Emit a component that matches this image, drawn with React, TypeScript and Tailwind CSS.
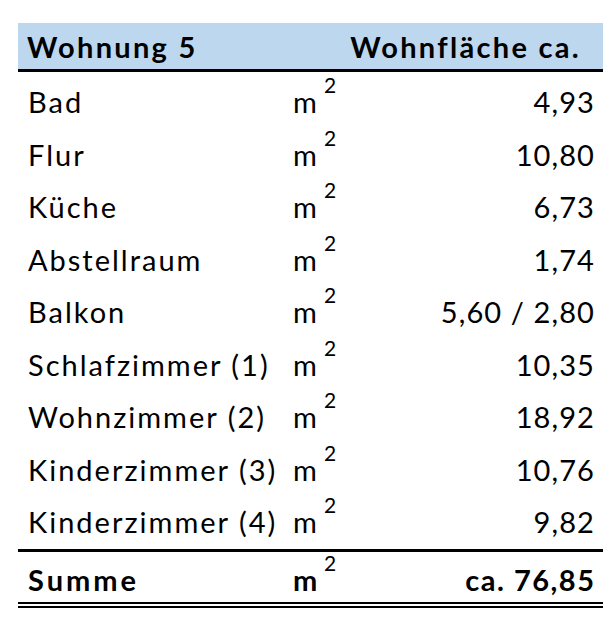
import React from "react";

const rows: [string, string][] = [
  ["Bad", "4,93"],
  ["Flur", "10,80"],
  ["Küche", "6,73"],
  ["Abstellraum", "1,74"],
  ["Balkon", "5,60 / 2,80"],
  ["Schlafzimmer (1)", "10,35"],
  ["Wohnzimmer (2)", "18,92"],
  ["Kinderzimmer (3)", "10,76"],
  ["Kinderzimmer (4)", "9,82"],
];

function Unit({ bold }: { bold?: boolean }) {
  return (
    <span className={`relative w-[60px] ${bold ? "font-bold" : ""}`}>
      m
      <span className="absolute left-[31px] top-[-13px] text-[21px] leading-none font-normal">2</span>
    </span>
  );
}

export default function App() {
  return (
    <div
      className="w-[616px] h-[618px] bg-white pt-[23px] pl-[18px] text-black"
      style={{ fontFamily: "Lato, 'Open Sans', sans-serif" }}
    >
      <div className="w-[585px]">
        <div className="h-[49px] bg-[#bdd7ee] border-b-[3px] border-black flex items-end justify-between pb-[8px] pl-[9px] pr-[22px] text-[29px] font-bold leading-none tracking-[2.3px]">
          <span>Wohnung 5</span>
          <span>Wohnfläche ca.</span>
        </div>
        <div className="pb-[4px]">
          {rows.map(([name, val]) => (
            <div
              key={name}
              className="h-[52.5px] flex items-end pb-[8.5px] text-[29px] leading-none"
            >
              <span className="w-[275px] pl-[10px] whitespace-nowrap tracking-[2px]">{name}</span>
              <Unit />
              <span className="flex-1 text-right pr-[8px] tracking-[1.1px] whitespace-nowrap">{val}</span>
            </div>
          ))}
        </div>
        <div
          className="h-[59px] border-t-[3px] border-b-[6px] border-double border-black flex items-end pb-[8px] text-[29px] font-bold leading-none"
          style={{ borderTopStyle: "solid" }}
        >
          <span className="w-[275px] pl-[10px] tracking-[3px]">Summe</span>
          <Unit bold />
          <span className="flex-1 text-right pr-[7.5px] tracking-[1.5px]">ca. 76,85</span>
        </div>
      </div>
    </div>
  );
}
